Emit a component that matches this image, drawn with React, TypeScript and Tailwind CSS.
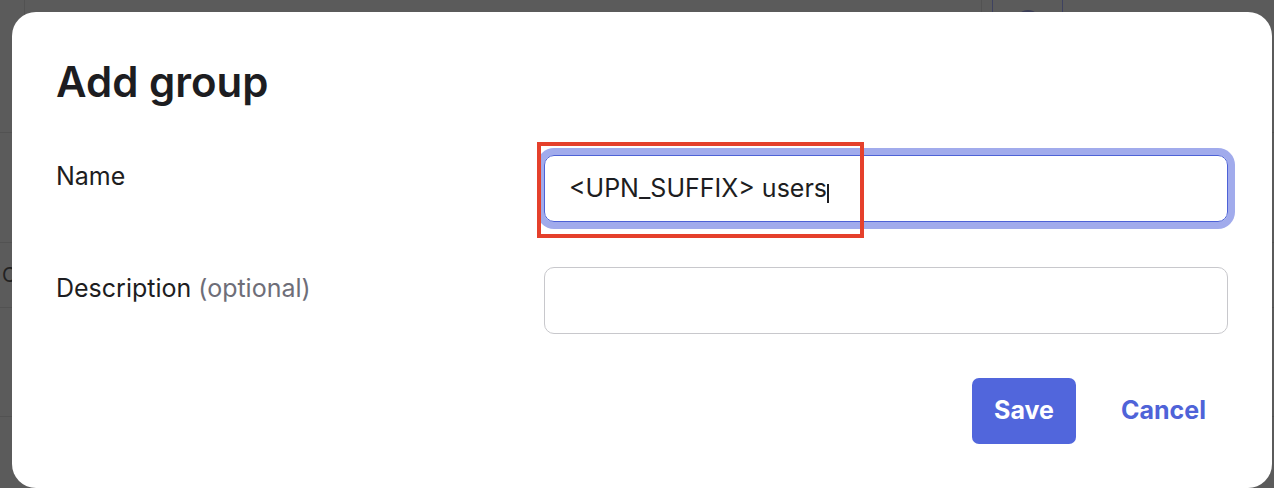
import React from 'react'

const font = { fontFamily: 'Inter, "Noto Sans", "Liberation Sans", sans-serif' }

const BackgroundPage = () => (
  <div className="h-[488px] w-full bg-[#5b5b5b] overflow-hidden">
    <div className="flex h-[133px] border-b border-[#525252]">
      <div className="w-[25px] border-r border-[#525252]" />
      <div className="w-[957px] border-r border-[#525252]" />
      <div className="w-[11px] border-r border-[#3e4260]" />
      <div className="w-[70px] border-r border-[#3e4260] flex justify-center pt-[10px]">
        <div className="w-[26px] h-[26px] rounded-full bg-[#3b3e56]" />
      </div>
    </div>
    <div className="h-[110px] border-b border-[#525252]" />
    <div className="h-[65px] border-b border-[#525252] flex items-center pl-[2px] text-[20px] text-[#222]">C</div>
    <div className="h-[109px] border-b border-[#525252]" />
  </div>
)

const Field = ({ label, optional, children }: { label: string; optional?: boolean; children: React.ReactNode }) => (
  <div className="grid grid-cols-[488px_1fr] items-start">
    <label className="pt-[6px] text-[25px] leading-[30px] text-[#1d1d21]">
      {label}
      {optional && <span className="text-[#6e6e78]"> (optional)</span>}
    </label>
    {children}
  </div>
)

export default function App() {
  return (
    <div className="relative w-[1274px] h-[488px] overflow-hidden" style={font}>
      <BackgroundPage />
      <div className="absolute left-[12px] top-[12px] w-[1260px] h-[476px] bg-white rounded-[24px] px-[44px] pt-[46px]">
        <h2 className="text-[42px] font-semibold text-[#1d1d21] leading-[48px]">Add group</h2>

        <div className="mt-[49px] flex flex-col gap-[45px]">
          <Field label="Name">
            <div className="relative">
              <div className="h-[67px] rounded-[10px] border border-[#4d62d6] ring-[7px] ring-[#a1abec] flex items-center px-[24px] text-[25px] text-[#1d1d21]">
                <span>&lt;UPN_SUFFIX&gt; users</span>
                <span className="w-[2px] h-[19px] mt-[10px] bg-[#1d1d21]" />
              </div>
              <div className="absolute left-[-7px] top-[-13px] w-[327px] h-[96px] border-[4px] border-[#e5402b]" />
            </div>
          </Field>

          <Field label="Description" optional>
            <div className="h-[67px] rounded-[10px] border border-[#c8c8cc]" />
          </Field>
        </div>

        <div className="mt-[44px] flex justify-end items-center gap-[45px]">
          <button className="w-[104px] h-[66px] rounded-[7px] bg-[#5166dc] text-white text-[25px] font-bold">Save</button>
          <button className="text-[#4f63d8] text-[25px] font-bold pr-[22px]">Cancel</button>
        </div>
      </div>
    </div>
  )
}
